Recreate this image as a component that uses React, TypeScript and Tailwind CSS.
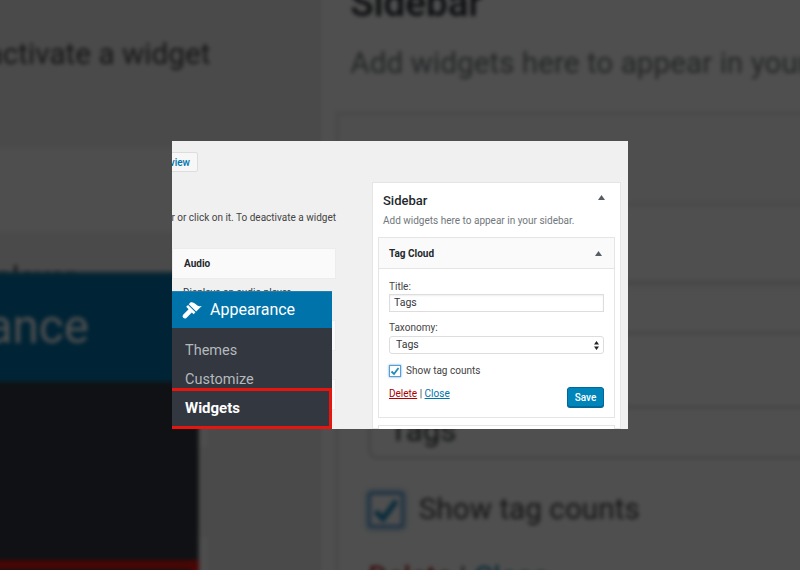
import React from 'react';

const font = "font-['Roboto','Liberation_Sans',sans-serif]";

const Triangle = () => (
  <svg width="7" height="5" viewBox="0 0 7 5" className="shrink-0">
    <path d="M3.5 0 7 5H0z" fill="#555d66" />
  </svg>
);

// admin-appearance brush
const BrushIcon = () => (
  <svg width="21" height="21" viewBox="0 0 20 20" fill="#fff" className="shrink-0">
    <path d="M14.48 11.06 7.41 3.99l1.5-1.5c.5-.56 2.3-.47 3.51.32 1.21.8 1.43 1.28 2.91 2.1 1.18.64 2.45 1.26 4.45.85z" />
    <path d="M13.77 11.77 6.7 4.7 4.93 6.47l2.3 2.3-5.2 5.2a2.2 2.2 0 0 0 3.1 3.1l5.2-5.2 1.67 1.67z" />
  </svg>
);

const SideMenu = () => (
  <div className="absolute left-0 top-[150px] h-[138px] w-[160px] bg-[#33373f]">
    <div className="flex h-[37px] items-center gap-[8px] border-t border-t-[#2b7ea8] bg-[#0073aa] pl-[9px]">
      <BrushIcon />
      <span className="text-[16px] text-white">Appearance</span>
    </div>
    <div className="pt-[8px] pl-[13px] text-[14.5px] leading-[29px] text-[#b4b9be]">
      <div>Themes</div>
      <div>Customize</div>
    </div>
    <div className="absolute right-0 bottom-0 left-0 flex h-[41px] items-center border-y-[3px] border-r-[3px] border-[#e8150f] pl-[13px] text-[15px] font-bold text-white">
      Widgets
    </div>
  </div>
);

const WidgetRow = ({ title, desc, descHeight }: { title: string; desc: string; descHeight: string }) => (
  <>
    <div className="flex h-[31px] items-center border border-[#ececec] bg-[#fafafa] pl-[11px] text-[10px] font-bold text-[#23282d]">
      {title}
    </div>
    <div className={`${descHeight} pt-[7px] pl-[11px] text-[10px] leading-[13px] whitespace-nowrap text-[#32373c]`}>{desc}</div>
  </>
);

const AvailableWidgets = () => (
  <div className="flex w-[164px] flex-col items-start pt-[11px]">
    <div className="flex w-[26px] justify-end">
      <div className="flex h-[20px] shrink-0 items-center rounded-[2px] border border-[#ddd] bg-[#f7f7f7] px-[7px] text-[10px] font-medium whitespace-nowrap text-[#0073aa]">
        Manage with Live Preview
      </div>
    </div>
    <div className="mt-[39px] flex w-full justify-end text-[10px] leading-[14px] whitespace-nowrap text-[#444]">
      <span className="shrink-0">To activate a widget drag it to a sidebar or click on it. To deactivate a widget</span>
    </div>
    <div className="mt-[23px] w-full">
      <WidgetRow title="Audio" desc="Displays an audio player." descHeight="h-[41px]" />
      <WidgetRow title="Calendar" desc="A calendar of your site's posts." descHeight="h-[28px]" />
      <WidgetRow title="Categories" desc="A list of categories." descHeight="h-[28px]" />
    </div>
  </div>
);

const TagCloud = () => (
  <div className="mx-[5px] mt-[6px] border border-[#e5e5e5] bg-white">
    <div className="flex h-[31px] items-center justify-between border-b border-[#e5e5e5] bg-[#fafafa] pr-[12px] pl-[10px] text-[10px] font-bold text-[#23282d]">
      <span>Tag Cloud</span>
      <Triangle />
    </div>
    <div className="px-[10px] pt-[11px] pb-[10px] text-[10px] text-[#444]">
      <div className="leading-[13px]">Title:</div>
      <div className="mt-[1px] flex h-[18px] items-center border border-[#ddd] px-[4px] text-[10.5px] text-[#32373c] shadow-[inset_0_1px_2px_rgba(0,0,0,0.07)]">
        Tags
      </div>
      <div className="mt-[9px] leading-[13px]">Taxonomy:</div>
      <div className="mt-[2px] flex h-[18px] items-center justify-between rounded-[3px] border border-[#ddd] pr-[4px] pl-[6px] text-[10.5px] text-[#32373c]">
        <span>Tags</span>
        <svg width="5" height="9" viewBox="0 0 5 9" fill="#222">
          <path d="M2.5 0 5 3.6H0zM2.5 9 0 5.4h5z" />
        </svg>
      </div>
      <div className="mt-[11px] flex items-center gap-[5px]">
        <div className="flex h-[12px] w-[12px] items-center justify-center border border-[#5b9dd9] bg-white shadow-[0_0_2px_rgba(30,140,190,0.8)]">
          <svg width="10" height="9" viewBox="0 0 10 9" fill="none" stroke="#1e8cbe" strokeWidth="1.8">
            <path d="M1.5 4.5 4 7l4.5-6" />
          </svg>
        </div>
        <span className="leading-[12px]">Show tag counts</span>
      </div>
      <div className="mt-[10px] flex items-start justify-between">
        <div className="leading-[13px]">
          <span className="text-[#a00] underline">Delete</span> | <span className="text-[#0073aa] underline">Close</span>
        </div>
        <div className="flex h-[20px] w-[37px] items-center justify-center rounded-[3px] border border-[#006799] bg-[#0085ba] text-[10px] font-medium text-white shadow-[0_1px_0_#006799]">
          Save
        </div>
      </div>
    </div>
  </div>
);

const SidebarCard = () => (
  <div className="mt-[41px] ml-[36px] w-[249px] shrink-0 border border-[#e5e5e5] bg-white pt-[8px]">
    <div className="flex items-start justify-between pr-[15px] pl-[10px]">
      <span className="text-[13px] leading-[19px] font-medium text-[#23282d]">Sidebar</span>
      <span className="pt-[4px]">
        <Triangle />
      </span>
    </div>
    <div className="mt-[1px] pl-[10px] text-[10px] leading-[20px] text-[#72777c]">Add widgets here to appear in your sidebar.</div>
    <TagCloud />
    <div className="mx-[5px] mt-[7px] h-[40px] border border-[#e5e5e5] bg-white" />
  </div>
);

const Panel = () => (
  <div className={`relative flex h-[288px] w-[456px] overflow-hidden bg-[#f0f0f0] ${font}`}>
    <AvailableWidgets />
    <SidebarCard />
    <SideMenu />
  </div>
);

export default function App() {
  return (
    <div className="relative flex h-[570px] w-[800px] items-center justify-center overflow-hidden bg-[#4a4a4a]">
      {/* same screenshot, blown up and dimmed behind the sharp one */}
      <div className="absolute top-[-174px] left-[-277px] origin-top-left scale-[2.973] blur-[0.7px] brightness-[0.31]">
        <Panel />
      </div>
      <div className="relative">
        <Panel />
      </div>
    </div>
  );
}
